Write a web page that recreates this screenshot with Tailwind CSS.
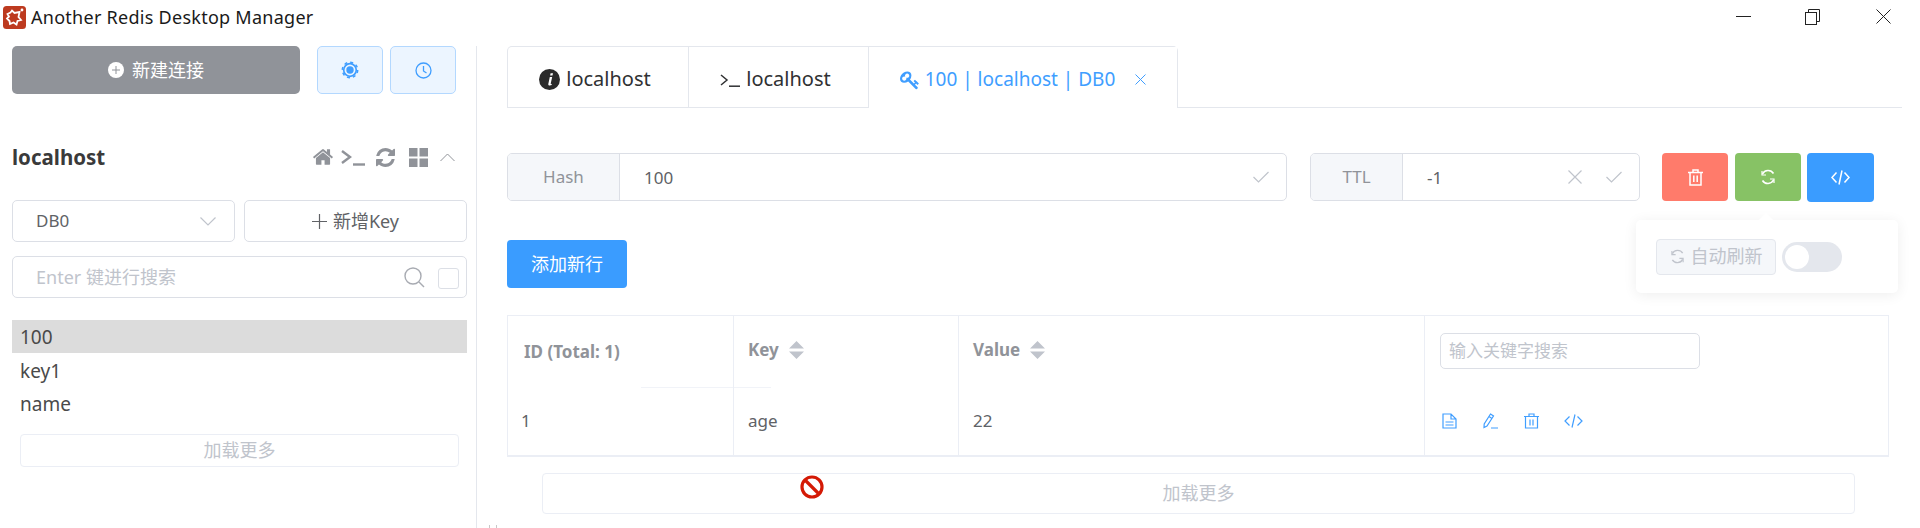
<!DOCTYPE html>
<html lang="zh">
<head>
<meta charset="utf-8">
<title>Another Redis Desktop Manager</title>
<script src="https://cdn.jsdelivr.net/npm/@tailwindcss/browser@4"></script>
</head>
<body class="m-0 bg-white overflow-hidden">
<div class="relative w-[1920px] h-[528px] overflow-hidden bg-white text-[#606266] font-['Noto_Sans','Noto_Sans_CJK_SC',sans-serif]">

  <!-- title bar -->
  <div class="h-[46px] flex items-start">
    <svg class="w-[23px] h-[23px] ml-[3px] mt-[6px]" viewBox="0 0 23 23"><rect width="23" height="23" rx="3.500" fill="#bd3a1f"/><path d="M4.500 8l3-1.500 1.500-2 2.500 2.500 5-1-1 5 2.500 3-3.500 1-1 3.500-3-2-3.500 1.500-.5-3-2.500-2.500 2-2z" fill="none" stroke="#fff" stroke-width="1.800"/><circle cx="19" cy="4" r="1.400" fill="#fff"/></svg>
    <span class="ml-[5px] mt-[4px] text-[18px] tracking-[0.27px] leading-[26px] text-[#1a1a1a]">Another Redis Desktop Manager</span>
    <div class="ml-auto relative w-[180px] h-[46px]">
      <div class="absolute right-[169px] top-[16px] w-[15px] h-px bg-[#222]"></div>
      <svg class="absolute right-[100px] top-[9px] w-[15px] h-[16px]" viewBox="0 0 15 16" fill="none" stroke="#222"><rect x="0.5" y="3.5" width="11" height="12"/><path d="M3.5 3.5V0.5H14.5V12.5H11.500"/></svg>
      <svg class="absolute right-[29px] top-[9px] w-[15px] h-[15px]" viewBox="0 0 15 15" fill="none" stroke="#222"><path d="M0.500 0.500L14.500 14.500M14.500 0.500L0.500 14.500"/></svg>
    </div>
  </div>

  <div class="flex h-[482px]">
    <!-- sidebar -->
    <aside class="w-[477px] h-full border-r border-[#e4e7ed] pl-3 pr-[9px] shrink-0">
      <div class="flex">
        <button class="w-[288px] h-[48px] rounded-[5px] bg-[#909399] text-white text-[18px] flex items-center justify-center gap-[8px]">
          <svg class="w-[16px] h-[16px]" viewBox="0 0 16 16"><circle cx="8" cy="8" r="8" fill="#fff"/><path d="M4 8h8M8 4v8" stroke="#909399" stroke-width="1"/></svg>
          新建连接
        </button>
        <button class="ml-[17px] w-[66px] h-[48px] rounded-[5px] bg-[#ecf5ff] border border-[#b3d8ff] flex items-center justify-center">
          <svg class="w-[18px] h-[18px]" viewBox="0 0 18 18" fill="none" stroke="#409eff"><circle cx="9" cy="9" r="6.300" stroke-width="1.700"/><circle cx="9" cy="9" r="7.700" stroke-width="1.500" stroke-dasharray="3.020 3.020"/><circle cx="9" cy="9" r="3.700" fill="#409eff" stroke="none"/></svg>
        </button>
        <button class="ml-[7px] w-[66px] h-[48px] rounded-[5px] bg-[#ecf5ff] border border-[#b3d8ff] flex items-center justify-center">
          <svg class="w-[17px] h-[17px]" viewBox="0 0 17 17" fill="none" stroke="#409eff" stroke-width="1.300"><circle cx="8.500" cy="8.500" r="7.500"/><path d="M8.500 4v5l3 2"/></svg>
        </button>
      </div>

      <div class="mt-[50px] h-[26px] flex items-center">
        <span class="text-[20.500px] font-bold text-[#3a3a3a]">localhost</span>
        <div class="ml-auto flex items-center mr-[12px]">
          <svg class="w-[22px] h-[22px]" viewBox="0 0 1792 1792" fill="#909399"><path d="M1472 992v480q0 26-19 45t-45 19h-384v-384h-256v384h-384q-26 0-45-19t-19-45v-480q0-1 .5-3t.5-3l575-474 575 474q1 2 1 6zm223-69l-62 74q-8 9-21 11h-3q-13 0-21-7l-692-577-692 577q-12 8-24 7-13-2-21-11l-62-74q-8-10-7-23.5t11-21.5l719-599q32-26 76-26t76 26l244 204v-195q0-14 9-23t23-9h192q14 0 23 9t9 23v408l219 182q10 8 11 21.5t-7 23.5z"/></svg>
          <svg class="ml-[7px] w-[24px] h-[18px]" viewBox="0 0 24 18" fill="none" stroke="#909399" stroke-width="2.400"><path d="M1 3l8 6-8 6"/><path d="M12 16.500h12"/></svg>
          <svg class="ml-[11px] w-[19px] h-[19px]" viewBox="0 0 1536 1536" fill="#909399"><path d="M1511 928q0 5-1 7-64 268-268 434.5t-478 166.5q-146 0-282.5-55t-243.5-157l-129 129q-19 19-45 19t-45-19-19-45v-448q0-26 19-45t45-19h448q26 0 45 19t19 45-19 45l-137 137q71 66 161 102t187 36q134 0 250-65t186-179q11-17 53-117 8-23 30-23h192q13 0 22.5 9.5t9.5 22.5zm25-800v448q0 26-19 45t-45 19h-448q-26 0-45-19t-19-45 19-45l138-138q-148-137-349-137-134 0-250 65t-186 179q-11 17-53 117-8 23-30 23h-199q-13 0-22.5-9.5t-9.5-22.5v-7q65-268 270-434.5t480-166.5q146 0 284 55.5t245 156.5l130-129q19-19 45-19t45 19 19 45z"/></svg>
          <svg class="ml-[14px] w-[19px] h-[19px]" viewBox="0 0 19 19" fill="#909399"><rect width="8.500" height="8.500"/><rect x="10.500" width="8.500" height="8.500"/><rect y="10.500" width="8.500" height="8.500"/><rect x="10.500" y="10.500" width="8.500" height="8.500"/></svg>
          <svg class="ml-[12px] w-[15px] h-[9px]" viewBox="0 0 15 9" fill="none" stroke="#909399" stroke-width="1"><path d="M0.500 8L7.500 1l7 7"/></svg>
        </div>
      </div>

      <div class="mt-[30px] flex gap-[9px]">
        <div class="w-[223px] h-[42px] border border-[#dcdfe6] rounded-[5px] flex items-center pl-[23px] pr-[18px] text-[17px]">
          <span>DB0</span>
          <svg class="ml-auto w-[16px] h-[9px]" viewBox="0 0 16 9" fill="none" stroke="#c0c4cc" stroke-width="1.200"><path d="M0.500 0.500L8 8l7.500-7.500"/></svg>
        </div>
        <button class="w-[223px] h-[42px] border border-[#dcdfe6] rounded-[5px] flex items-center justify-center gap-[6px] text-[18px]">
          <svg class="w-[15px] h-[15px]" viewBox="0 0 15 15" stroke="#606266" stroke-width="1.200"><path d="M0 7.500h15M7.500 0v15"/></svg>
          新增Key
        </button>
      </div>

      <div class="mt-[14px] w-[455px] h-[42px] border border-[#dcdfe6] rounded-[5px] flex items-center pl-[23px] text-[18px]">
        <span class="text-[#c0c4cc]">Enter 键进行搜索</span>
        <svg class="ml-auto w-[21px] h-[21px]" viewBox="0 0 21 21" fill="none" stroke="#a8abb2" stroke-width="1.400"><circle cx="9" cy="9" r="8"/><path d="M15 15l5 5"/></svg>
        <div class="ml-[13px] mr-[7px] w-[21px] h-[21px] mt-[2px] border border-[#dcdfe6] rounded-[3px]"></div>
      </div>

      <ul class="mt-[22px] w-[455px] text-[19px] text-[#4a4a4a]">
        <li class="h-[33px] leading-[35px] pl-[8px] bg-[#dcdcdc]">100</li>
        <li class="h-[33px] leading-[37px] pl-[8px]">key1</li>
        <li class="h-[33px] leading-[37px] pl-[8px]">name</li>
      </ul>
      <button class="mt-[15px] ml-[8px] w-[439px] h-[33px] border border-[#ebeef5] rounded-[4px] text-[#c0c4cc] text-[18px] flex items-center justify-center">加载更多</button>
    </aside>

    <!-- main -->
    <main class="flex-1 pl-[30px] pr-[18px] relative">
      <div class="h-[62px] border-b border-[#e4e7ed] flex">
        <div class="flex h-[62px] border border-b-0 border-[#e4e7ed] rounded-t-[5px] text-[#303133] text-[20px]">
          <div class="w-[181px] h-[61px] border-r border-[#e4e7ed] flex items-center justify-center gap-[6px] pt-[3px] pr-[6px]">
            <svg class="w-[21px] h-[21px]" viewBox="0 0 21 21"><circle cx="10.500" cy="10.500" r="10.500" fill="#2b2b2b"/><path d="M11.600 4.200h2.400l-.5 2.400h-2.400zM10.800 8h2.400l-1.500 6.600c-.1.5.5.4 1 .1v1.400c-1.500.8-3.700.8-3.400-1.100z" fill="#fff"/></svg>
            localhost
          </div>
          <div class="w-[180px] h-[61px] border-r border-[#e4e7ed] flex items-center justify-center gap-[6px] pt-[3px] pr-[6px]">
            <svg class="w-[20px] h-[13px] mt-[3px]" viewBox="0 0 20 13" fill="none" stroke="#303133" stroke-width="1.500"><path d="M1 1l6 5-6 5"/><path d="M9 12.200h11"/></svg>
            localhost
          </div>
          <div class="w-[308px] h-[62px] bg-white flex items-center justify-center gap-[5px] text-[19px] text-[#409eff] pt-[3px]">
            <svg class="w-[20px] h-[20px]" viewBox="0 0 1792 1792" fill="#409eff"><path d="M832 512q0-80-56-136t-136-56-136 56-56 136q0 42 19 83-41-19-83-19-80 0-136 56t-56 136 56 136 136 56 136-56 56-136q0-42-19-83 41 19 83 19 80 0 136-56t56-136zm851 704q0 17-49 66t-66 49q-9 0-28.5-16t-36.5-33-38.5-40-24.5-26l-96 96 220 220q28 28 28 68 0 42-39 81t-81 39q-40 0-68-28l-671-671q-176 131-365 131-163 0-265.5-102.5t-102.5-265.5q0-160 95-313t248-248 313-95q163 0 265.5 102.5t102.5 265.5q0 189-131 365l355 355 96-96q-3-3-26-24.5t-40-38.5-33-36.5-16-28.5q0-17 49-66t66-49q13 0 23 10 6 6 46 44.5t82 79.5 86.5 86 73 78 28.5 41z"/></svg>
            100 | localhost | DB0
            <svg class="ml-[15px] w-[11px] h-[11px]" viewBox="0 0 11 11" fill="none" stroke="#409eff"><path d="M0.500 0.500l10 10M10.500 0.500l-10 10"/></svg>
          </div>
        </div>
      </div>

      <!-- key header -->
      <div class="mt-[45px] h-[48px] flex text-[17px]">
        <div class="w-[780px] h-[48px] border border-[#dcdfe6] rounded-[5px] flex items-center overflow-hidden">
          <div class="w-[112px] h-full bg-[#f5f7fa] border-r border-[#dcdfe6] text-[#909399] flex items-center justify-center">Hash</div>
          <span class="ml-[24px] mt-[2px]">100</span>
          <svg class="ml-auto mr-[17px] w-[16px] h-[12px]" viewBox="0 0 16 12" fill="none" stroke="#c0c4cc" stroke-width="1.200"><path d="M0.500 6l5 5L15.500 1"/></svg>
        </div>
        <div class="ml-[23px] w-[330px] h-[48px] border border-[#dcdfe6] rounded-[5px] flex items-center overflow-hidden">
          <div class="w-[92px] h-full bg-[#f5f7fa] border-r border-[#dcdfe6] text-[#909399] flex items-center justify-center">TTL</div>
          <span class="ml-[24px] mt-[2px]">-1</span>
          <svg class="ml-auto w-[14px] h-[14px]" viewBox="0 0 14 14" fill="none" stroke="#c0c4cc" stroke-width="1.200"><path d="M0.500 0.500l13 13M13.500 0.500l-13 13"/></svg>
          <svg class="ml-[24px] mr-[17px] w-[16px] h-[12px]" viewBox="0 0 16 12" fill="none" stroke="#c0c4cc" stroke-width="1.200"><path d="M0.500 6l5 5L15.500 1"/></svg>
        </div>
        <button class="ml-[22px] w-[66px] h-[48px] rounded-[4px] bg-[#ff7b6b] flex items-center justify-center">
          <svg class="w-[15px] h-[17px]" viewBox="0 0 15 17" fill="none" stroke="#fff" stroke-width="1.500"><path d="M0 3.500h15M2 3.500V16h11V3.500M5 3V1h5v2M5.800 6.500V13M9.200 6.500V13"/></svg>
        </button>
        <button class="ml-[7px] w-[66px] h-[48px] rounded-[4px] bg-[#87c265] flex items-center justify-center">
          <svg class="w-[16px] h-[16px]" viewBox="0 0 16 16" fill="none" stroke="#fff" stroke-width="1.600"><path d="M13.500 4.500A6.300 6.300 0 0 0 2.500 5M2.500 11.500A6.300 6.300 0 0 0 13.500 11"/><path d="M2 2v4h4M14 14v-4h-4" stroke-width="1.200"/></svg>
        </button>
        <button class="ml-[6px] w-[67px] h-[49px] rounded-[4px] bg-[#3a9cff] flex items-center justify-center">
          <svg class="w-[19px] h-[15px]" viewBox="0 0 19 15" fill="none" stroke="#fff" stroke-width="1.500"><path d="M5.500 2.500L1 7.500l4.500 5M13.500 2.500L18 7.500l-4.500 5M11 .5L8 14.500"/></svg>
        </button>
      </div>

      <button class="mt-[39px] w-[120px] h-[48px] rounded-[4px] bg-[#3a9cff] text-white text-[18px] flex items-center justify-center">添加新行</button>

      <!-- table -->
      <div class="relative mt-[27px] w-[1382px] border border-b-2 border-[#ebeef5] grid grid-cols-[226px_225px_466px_1fr] text-[17px]">
        <div class="absolute left-[133px] top-[71px] w-[130px] h-px bg-[#ebeef5]/70"></div>
        <div class="h-[71px] border-r border-[#ebeef5] pl-[16px] flex items-center font-bold text-[#909399]">ID (Total: 1)</div>
        <div class="h-[71px] border-r border-[#ebeef5] pl-[14px] flex items-center pb-[4px] font-bold text-[#909399] gap-[10px]">Key
          <svg class="w-[15px] h-[18px]" viewBox="0 0 15 18" fill="#c0c4cc"><path d="M7.500 0l7.500 7.500H0zM7.500 18L0 10.500h15z"/></svg>
        </div>
        <div class="h-[71px] border-r border-[#ebeef5] pl-[14px] flex items-center pb-[4px] font-bold text-[#909399] gap-[10px]">Value
          <svg class="w-[15px] h-[18px]" viewBox="0 0 15 18" fill="#c0c4cc"><path d="M7.500 0l7.500 7.500H0zM7.500 18L0 10.500h15z"/></svg>
        </div>
        <div class="h-[71px] pl-[15px] pt-[17px]">
          <div class="w-[260px] h-[36px] border border-[#dcdfe6] rounded-[5px] pl-[8px] leading-[34px] text-[#c0c4cc]">输入关键字搜索</div>
        </div>
        <div class="h-[68px] border-r border-[#ebeef5] pl-[13px] flex items-center">1</div>
        <div class="h-[68px] border-r border-[#ebeef5] pl-[14px] flex items-center">age</div>
        <div class="h-[68px] border-r border-[#ebeef5] pl-[14px] flex items-center">22</div>
        <div class="h-[68px] pl-[17px] flex items-center">
          <svg class="w-[15px] h-[16px]" viewBox="0 0 15 16" fill="none" stroke="#409eff" stroke-width="1.200"><path d="M1 1h8l5 5v9H1zM9 1v5h5M3.500 9h8M3.500 12h8"/></svg>
          <svg class="ml-[25px] w-[17px] h-[16px]" viewBox="0 0 17 16" fill="none" stroke="#409eff" stroke-width="1.200"><path d="M8.500 1l3 2-6.500 10-3 1.500.2-3.500zM7 3.500l3 2M9 15h7"/></svg>
          <svg class="ml-[25px] w-[15px] h-[16px]" viewBox="0 0 15 16" fill="none" stroke="#409eff" stroke-width="1.200"><path d="M0 3.500h15M1.500 3.500V15h12V3.500M5 3V1h5v2M6 6.500v6M9 6.500v6"/></svg>
          <svg class="ml-[25px] w-[19px] h-[14px]" viewBox="0 0 19 14" fill="none" stroke="#409eff" stroke-width="1.200"><path d="M5.500 2.500L1 7l4.500 4.500M13.500 2.500L18 7l-4.500 4.500M11 .5L8 13.500"/></svg>
        </div>
      </div>
      <button class="mt-[16px] ml-[35px] w-[1313px] h-[41px] border border-[#ebeef5] rounded-[4px] text-[#c0c4cc] text-[18px] flex items-center justify-center">加载更多</button>
    </main>
  </div>

  <!-- popover over the refresh button -->
  <div class="absolute left-[1636px] top-[220px] w-[262px] h-[73px] bg-white rounded-[5px] shadow-[0_2px_14px_rgba(0,0,0,0.07)] flex items-center pl-[20px]">
    <div class="absolute left-[125px] -top-[5px] w-[10px] h-[10px] bg-white rotate-45"></div>
    <div class="w-[120px] h-[36px] bg-[#f5f7fa] border border-[#e4e7ed] rounded-[4px] flex items-center justify-center gap-[6px] text-[#c0c4cc] text-[18px]">
      <svg class="w-[15px] h-[15px]" viewBox="0 0 16 16" fill="none" stroke="#c0c4cc" stroke-width="1.500"><path d="M13.500 4.500A6.300 6.300 0 0 0 2.500 5M2.500 11.500A6.300 6.300 0 0 0 13.500 11"/><path d="M2 2v4h4M14 14v-4h-4" stroke-width="1.200"/></svg>
      自动刷新
    </div>
    <div class="ml-[6px] w-[60px] h-[30px] rounded-full bg-[#e4e7ed] p-[3px]"><div class="w-[24px] h-[24px] rounded-full bg-white"></div></div>
  </div>

  <!-- forbidden cursor -->
  <svg class="absolute left-[800px] top-[475px] w-[24px] h-[24px]" viewBox="0 0 24 24" fill="none" stroke="#d41a06" stroke-width="3.200"><circle cx="12" cy="12" r="10"/><path d="M5 5l14 14"/></svg>
  <!-- resize grip -->
  <div class="absolute left-[489px] top-[525px] w-[8px] h-[3px] border-l border-r border-[#c8c8c8]"></div>
</div>
</body>
</html>
